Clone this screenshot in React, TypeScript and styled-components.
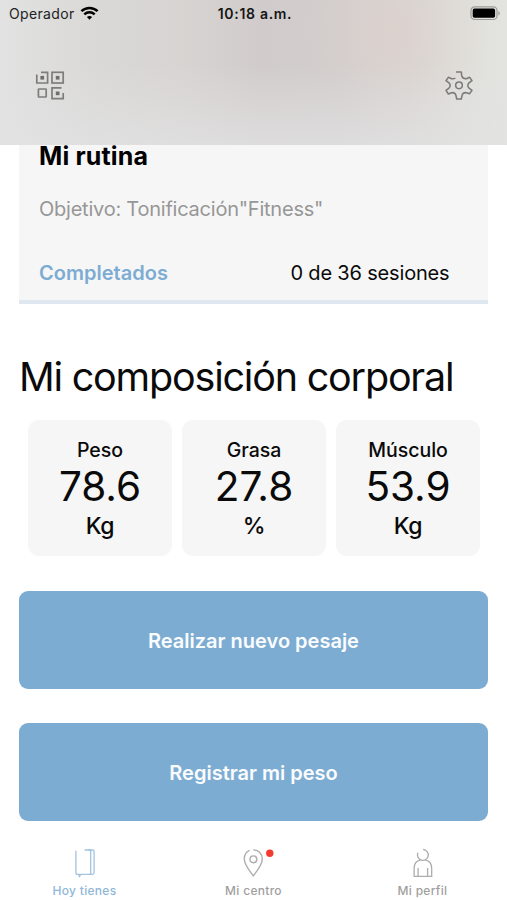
import React from 'react';
import styled, { createGlobalStyle } from 'styled-components';

const Global = createGlobalStyle`
  * { box-sizing: border-box; }
  html, body { margin: 0; padding: 0; background: #fff; }
  body { font-family: Inter, "Liberation Sans", sans-serif; color: #0a0a0a; }
  h1, h2, p { margin: 0; font-weight: 400; }
  button { font-family: inherit; border: 0; padding: 0; background: none; cursor: pointer; }
  svg { display: block; fill: none; }
`;

const Screen = styled.div`
  width: 507px;
  height: 900px;
  display: flex;
  flex-direction: column;
  overflow: hidden;
  background: #fff;
`;

const Header = styled.header`
  height: 145px;
  flex: none;
  background:
    linear-gradient(180deg, rgba(226, 226, 227, 0) 45%, rgba(226, 226, 227, 0.75) 100%),
    radial-gradient(ellipse 100px 100px at 390px 32px, rgba(222, 209, 205, 0.6), rgba(222, 209, 205, 0) 100%),
    linear-gradient(90deg, #e2e2e2 0, #dad9d7 90px, #d7d4d2 180px, #d1cccb 260px, #d1cdcc 340px, #d9d5d2 410px, #dfded9 455px, #e3e4e0 507px);
`;

const StatusBar = styled.div`
  display: grid;
  grid-template-columns: 1fr auto 1fr;
  align-items: center;
  height: 27px;
  padding: 0 6px 0 9px;
`;

const Carrier = styled.div`
  display: flex;
  align-items: center;
  gap: 5px;
  font-size: 14px;
  letter-spacing: 0.35px;
  color: #222;
`;

const Clock = styled.div`
  font-size: 14px;
  font-weight: 600;
  letter-spacing: 0.7px;
  color: #151515;
`;

const BatterySlot = styled.div`
  justify-self: end;
`;

const NavBar = styled.div`
  display: flex;
  justify-content: space-between;
  padding: 41px 32px 0 34px;
`;

const Content = styled.main`
  flex: 1;
  padding: 0 19px;
`;

const RoutineCard = styled.section`
  height: 159px;
  padding: 0 38.5px 0 20px;
  background: #f6f6f6;
  border-bottom: 4px solid #dfe8f0;
`;

const RoutineTitle = styled.h2`
  font-size: 25px;
  font-weight: 700;
  line-height: 22px;
  letter-spacing: 0.15px;
  color: #000;
`;

const Goal = styled.p`
  margin-top: 30px;
  font-size: 20px;
  line-height: 24px;
  letter-spacing: -0.23px;
  color: #979797;
`;

const Progress = styled.div`
  display: flex;
  justify-content: space-between;
  margin-top: 40px;
  font-size: 20px;
  line-height: 24px;
`;

const Done = styled.span`
  font-weight: 600;
  letter-spacing: 0.02px;
  color: #7dacd3;
`;

const Sessions = styled.span`
  letter-spacing: -0.17px;
  color: #0a0a0a;
`;

const Heading = styled.h1`
  margin-top: 49px;
  font-size: 39.5px;
  line-height: 48px;
  letter-spacing: -1.2px;
  white-space: nowrap;
`;

const Metrics = styled.div`
  display: grid;
  grid-template-columns: repeat(3, 144px);
  gap: 10px;
  margin: 19px 0 0 9px;
`;

const Metric = styled.div`
  height: 136px;
  padding-top: 18px;
  border-radius: 11px;
  background: #f6f6f6;
  text-align: center;
`;

const MetricLabel = styled.div`
  font-size: 19.5px;
  font-weight: 450;
  line-height: 24px;
`;

const MetricValue = styled.div`
  margin-top: 4px;
  font-size: 40.5px;
  line-height: 42px;
`;

const MetricUnit = styled.div`
  margin-top: 4px;
  font-size: 23px;
  font-weight: 500;
  line-height: 28px;
  letter-spacing: -0.4px;
`;

const Actions = styled.div`
  display: flex;
  flex-direction: column;
  gap: 34.5px;
  margin-top: 35px;
`;

const Action = styled.button`
  height: 97.5px;
  padding-top: 2px;
  border-radius: 9px;
  background: #7dacd3;
  color: #fafcfe;
  font-size: 20px;
  font-weight: 600;
`;

const TabBar = styled.nav`
  height: 56px;
  flex: none;
  display: grid;
  grid-template-columns: repeat(3, 1fr);
`;

const Tab = styled.button<{ $active?: boolean }>`
  display: flex;
  flex-direction: column;
  align-items: center;
  justify-content: flex-start;
  padding-top: 3px;
  font-size: 12px;
  line-height: 16px;
  font-weight: 500;
  letter-spacing: 0.3px;
  color: ${(p) => (p.$active ? '#90b7d8' : '#9f9f9f')};
`;

const TabIcon = styled.span`
  height: 32px;
  margin-bottom: 4px;
`;

const WifiIcon = () => (
  <svg width="19" height="15" viewBox="0 0 19 15" stroke="#000">
    <path d="M1.4 5.2C6 .9 13 .9 17.6 5.2" strokeWidth="2.5" />
    <path d="M4.3 8.3C7.3 5.6 11.7 5.6 14.7 8.3" strokeWidth="2.4" />
    <path d="M6.9 11C8.3 9.7 10.7 9.7 12.1 11L9.5 13.7Z" fill="#000" stroke="none" />
  </svg>
);

const BatteryIcon = () => (
  <svg width="31" height="15" viewBox="0 0 31 15">
    <rect x="1" y=".9" width="26" height="12.6" rx="3.6" stroke="#9c9c99" strokeWidth="1.2" />
    <rect x="2.7" y="2.6" width="22.4" height="9.2" rx="1.8" fill="#000" />
    <path d="M28.4 4.9C30.3 5.6 30.3 8.6 28.4 9.4Z" fill="#9c9c99" />
  </svg>
);

const QrIcon = () => (
  <svg width="32" height="34" viewBox="34 68 32 34" stroke="#7e7d7c" strokeWidth="1.7">
    <path d="M36.8 74.5V83H47.6V72.3H41" />
    <rect x="52" y="72.3" width="11.2" height="10.7" />
    <rect x="38.4" y="89" width="7.8" height="8" rx=".6" />
    <path d="M61.5 87.9H52V98.7H63.2V93" />
    <g fill="#6f6e6d" stroke="none">
      <rect x="40.4" y="75.9" width="3.7" height="3.7" />
      <rect x="55.8" y="75.9" width="3.7" height="3.7" />
      <rect x="55.8" y="91.5" width="3.7" height="3.7" />
    </g>
  </svg>
);

const GearIcon = () => (
  <svg width="32" height="34" viewBox="569 204 96 102" stroke="#7b7b79" strokeWidth="4.6" strokeLinejoin="round">
    <path d="M608 216H624L625 227Q628 237 639 236L649 232L656 242L648 248Q639 256 648 265L656 271L649 281L639 278Q628 277 626 287L624 297H610L608 287Q606 277 595 278L585 282L578 271L586 265Q595 256 586 248L578 242L585 232L595 236Q602 237 606 234" />
    <circle cx="617" cy="256" r="10" />
  </svg>
);

const BookIcon = () => (
  <svg width="26" height="32" viewBox="71.5 847 26 32" stroke="#a3c3df" strokeWidth="1.3">
    <path d="M75.4 850.8V872.5Q75.4 874.4 77.2 874.4H90.2V850H84" />
    <path d="M88 850H91.8Q93.6 850 93.6 851.8V872.6Q93.6 874.4 91.8 874.4H88" />
    <path d="M78 874.4L79 876.4L80.2 874.4" />
  </svg>
);

const PinIcon = () => (
  <svg width="40" height="32" viewBox="233.5 847 40 32" stroke="#adadad" strokeWidth="1.4">
    <path d="M249 850.4C245.7 851.9 243.8 855 243.8 858.8C243.8 865.2 249.5 871.4 252.8 875.9C256.1 871.4 261.8 865.2 261.8 858.8C261.8 853.6 258 849.9 252.8 849.9" />
    <circle cx="252.9" cy="859.3" r="3.4" />
    <circle cx="269.3" cy="853.3" r="3.7" fill="#f43b30" stroke="none" />
  </svg>
);

const PersonIcon = () => (
  <svg width="26" height="32" viewBox="410 847 26 32" stroke="#adadad" strokeWidth="1.3">
    <path d="M423.2 849.5A5.4 5.4 0 1 1 417.9 852.8" />
    <path d="M420.4 860.2C416 861 414.1 864.4 414.1 868.4V876.3H431.7V868.4C431.7 864.4 429.8 861 425.4 860.2" />
    <path d="M418.1 868V876M427.6 868V876" />
  </svg>
);

const metrics = [
  { label: 'Peso', value: '78.6', unit: 'Kg' },
  { label: 'Grasa', value: '27.8', unit: '%' },
  { label: 'Músculo', value: '53.9', unit: 'Kg' },
];

export default function App() {
  return (
    <Screen>
      <Global />
      <Header>
        <StatusBar>
          <Carrier>Operador <WifiIcon /></Carrier>
          <Clock>10:18 a.m.</Clock>
          <BatterySlot><BatteryIcon /></BatterySlot>
        </StatusBar>
        <NavBar>
          <button aria-label="Código QR"><QrIcon /></button>
          <button aria-label="Ajustes"><GearIcon /></button>
        </NavBar>
      </Header>
      <Content>
        <RoutineCard>
          <RoutineTitle>Mi rutina</RoutineTitle>
          <Goal>Objetivo: Tonificación"Fitness"</Goal>
          <Progress>
            <Done>Completados</Done>
            <Sessions>0 de 36 sesiones</Sessions>
          </Progress>
        </RoutineCard>
        <Heading>Mi composición corporal</Heading>
        <Metrics>
          {metrics.map((m) => (
            <Metric key={m.label}>
              <MetricLabel>{m.label}</MetricLabel>
              <MetricValue>{m.value}</MetricValue>
              <MetricUnit>{m.unit}</MetricUnit>
            </Metric>
          ))}
        </Metrics>
        <Actions>
          <Action>Realizar nuevo pesaje</Action>
          <Action>Registrar mi peso</Action>
        </Actions>
      </Content>
      <TabBar>
        <Tab $active><TabIcon><BookIcon /></TabIcon>Hoy tienes</Tab>
        <Tab><TabIcon><PinIcon /></TabIcon>Mi centro</Tab>
        <Tab><TabIcon><PersonIcon /></TabIcon>Mi perfil</Tab>
      </TabBar>
    </Screen>
  );
}
